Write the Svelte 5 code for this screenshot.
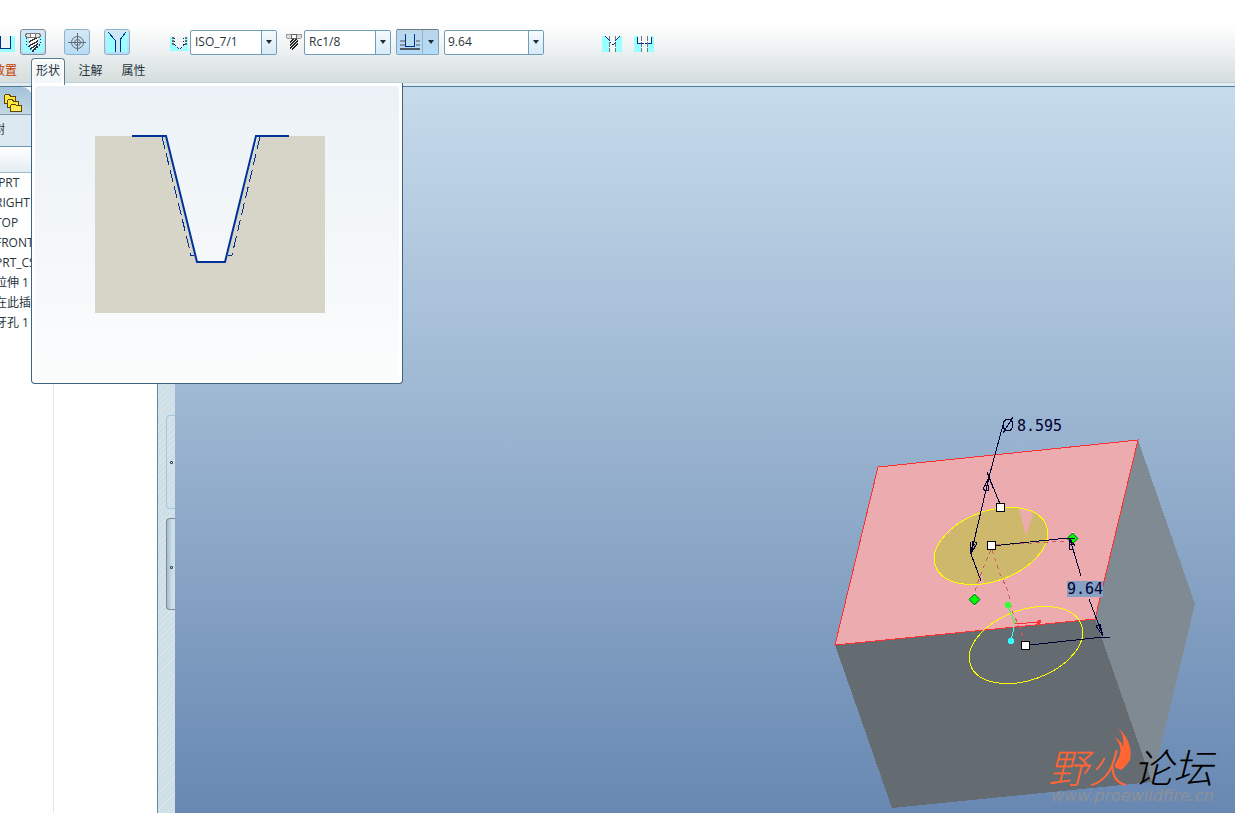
<script>
  let standard = $state('ISO_7/1');
  let size = $state('Rc1/8');
  let depth = $state('9.64');
  const tree = ['RIGHT', 'TOP', 'FRONT', 'PRT_CSYS', '拉伸 1', '在此插入', '牙孔 1'];
</script>

<div class="app">
  <header>
    <div class="toolbar">
      <button class="flat" aria-label="U">
        <svg class="crisp" width="20" height="16"><path fill="#9ff" d="M0 0h20v16H0z" /><path fill="#eef4f6" d="M5 0h10v12H5z" /><path d="M5 0v12h10V0" fill="none" stroke="#003090" /></svg>
      </button>
      <button class="tool on dark" aria-label="Thread">
        <svg class="crisp" width="20" height="20" viewBox="0 0 20 20">
          <path fill="#9ff" d="M0 4h20v16H0z" />
          <path d="M4 4h13v8l-6 8-7-8z" fill="#c8e2f0" />
          <path d="M6 5h9v10l-4 5-5-5z" fill="#fff" />
          <path d="M6 10l9-5M6 14l9-5M7 17l8-5M9 19l5-4" stroke="#333" stroke-width="1.500" />
          <path d="M3.500 1.500h13l1 2-1 2h-13l-1-2z" fill="#e4e4e4" stroke="#777" />
          <path d="M7.500 2v3h5V2" fill="#fff" stroke="#777" />
          <path d="M3.500 6v6l7 7 7-7V6" fill="none" stroke="#003090" stroke-dasharray="1 2" />
        </svg>
      </button>
      <button class="tool on" aria-label="Target">
        <svg width="20" height="20" viewBox="0 0 20 20" fill="none" stroke="#626c74"><circle cx="10.500" cy="10.500" r="6" /><circle cx="10.500" cy="10.500" r="3" /><path class="crisp" d="M10.500 1v18M1 10.500h18" /></svg>
      </button>
      <button class="tool on" aria-label="Countersink">
        <svg class="crisp" width="20" height="20" viewBox="0 0 20 20"><path d="M0 0h20v20H0z" fill="#9ff" /><path d="M1 0h18l-6 8v12H8V8z" fill="#cce6f6" /><path d="M1 0l7 8v12M19 0l-6 8v12" fill="none" stroke="#003090" /></svg>
      </button>

      <label class="icon gap-standard" for="standard">
        <svg class="crisp" width="18" height="14" viewBox="0 0 18 14"><path fill="#9ff" d="M0 0h18v14H0z" /><path fill="#eef4f6" d="M4 0h11v8l-5 5-6-5z" /><path d="M4 7l5 5h1l5-5" fill="none" stroke="#003090" stroke-dasharray="3 1" /><path d="M2.500 0v9M15.500 0v9" stroke="#667" stroke-width="2" stroke-dasharray="2 1" /><path d="M4.500 1v7M13.500 1v7" stroke="#223" stroke-dasharray="1 2" /></svg>
      </label>
      <div class="combo">
        <select id="standard" aria-label="Standard" bind:value={standard}><option>ISO_7/1</option></select>
        <span class="arrow"></span>
      </div>

      <label class="icon gap-size" for="size">
        <svg class="crisp" width="18" height="18" viewBox="0 0 18 18"><path d="M5 6h8v7l-3 4-2 0-3-3z" fill="#eee" /><path d="M5 9l5-4M5 12l8-7M5 15l8-7M7 16l6-5" stroke="#222" stroke-width="1.500" /><path d="M1.500 1.500h15v3l-1 1h-13l-1-1z" fill="#ddd" stroke="#999" /><path d="M6.500 1.500h5v4h-5z" fill="#fff" stroke="#666" /></svg>
      </label>
      <div class="combo">
        <select id="size" aria-label="Size" bind:value={size}><option>Rc1/8</option></select>
        <span class="arrow"></span>
      </div>

      <div class="split">
        <button aria-label="Depth option">
          <svg class="crisp" width="22" height="18" viewBox="0 0 22 18"><path d="M1 8h20M1 12h20" stroke="#8795a0" stroke-width="2" /><path d="M1 16h20" stroke="#505a62" stroke-width="2" /><path d="M6 0h11v14H6z" fill="#b9dbf2" /><path d="M6.500 1v12h9V1" fill="none" stroke="#003090" /></svg>
        </button>
        <button class="more" aria-label="More depth options"><span class="arrow bare"></span></button>
      </div>
      <div class="combo wide">
        <input aria-label="Depth" bind:value={depth} />
        <button class="arrow" aria-label="Recent depths"></button>
      </div>

      <button class="flat gap-end" aria-label="Exit countersink">
        <svg class="crisp" width="20" height="16" viewBox="0 0 20 16"><path fill="#9ff" d="M0 0h20v16H0z" /><path fill="#f2f6f8" d="M3 0h15l-4 5v11H7V5z" /><path d="M7.500 0v16M13.500 0v16" stroke="#777" stroke-dasharray="5 1" /><path d="M3 0l5 5M18 0l-5 5" stroke="#003090" fill="none" /><path d="M8 6l3 3 3-3" stroke="#003090" stroke-dasharray="2 1" fill="none" /></svg>
      </button>
      <button class="flat" aria-label="Counterbore">
        <svg class="crisp" width="20" height="16" viewBox="0 0 20 16"><path fill="#9ff" d="M0 0h20v16H0z" /><path fill="#f2f6f8" d="M4 0h13v7h-4v9H8V7H4z" /><path d="M7.500 0v16M13.500 0v16" stroke="#777" stroke-dasharray="5 1" /><path d="M3.500 1v6.500h4M17.500 1v6.500h-4" stroke="#003090" fill="none" /><path d="M8 7.500h6" stroke="#003090" stroke-dasharray="2 1" /></svg>
      </button>
    </div>

    <nav>
      <button class="tab warn">放置</button>
      <button class="tab active">形状</button>
      <button class="tab">注解</button>
      <button class="tab">属性</button>
      <section class="panel">
        <div class="sheet">
          <svg class="crisp" width="230" height="178" viewBox="0 0 230 178">
            <path d="M0 1h71l31 125h28l33-125h67v177H0z" fill="#d7d4c8" />
            <path d="M67 2l29 118h3M165 2l-28 118h-4" fill="none" stroke="#003090" stroke-dasharray="12 5" />
            <path d="M95 120.500h4M133 120.500h4" stroke="#003090" />
            <path class="smooth" d="M37 1h34l31 126h28L161 1h33" fill="none" stroke="#003399" stroke-width="2" />
          </svg>
        </div>
      </section>
    </nav>
  </header>

  <main>
    <aside>
      <div class="side-tab">
        <svg class="crisp" width="20" height="20" viewBox="0 0 20 20" fill="#ffe83a" stroke="#5b4700"><path d="M1.500 2.500l1-1h4l1 2h5v7h-11z" /><path d="M4.500 7.500l1-1h4l1 2h5v6h-11z" /><path d="M7.500 12.500l1-1h4l1 1h5v6h-11z" /><path d="M9 15h8M9 17h8" stroke="#fffac0" stroke-dasharray="1 1" /></svg>
      </div>
      <div class="side-title"><span>模型树</span></div>
      <div class="side-head"></div>
      <ul>
        <li><span>.PRT</span></li>
        {#each tree as item}<li><span>{item}</span></li>{/each}
      </ul>
    </aside>
    <div class="sash">
      <button class="grip" aria-label="Toggle navigator"><i></i></button>
      <button class="grip pressed" aria-label="Toggle browser"><i></i></button>
    </div>

    <div class="view">
      <svg class="scene crisp" viewBox="175 87 1060 726" preserveAspectRatio="xMaxYMax meet">
        <path d="M1138 440l57 164-43 178-57-163z" fill="#808a92" />
        <path d="M835 645l260-26 57 163-260 26z" fill="#646b71" />
        <path d="M878 467l260-27-43 179-260 26z" fill="#ecabaf" stroke="#ff3030" />
        <ellipse cx="991" cy="546" rx="59" ry="35" transform="rotate(-20 991 546)" fill="#ceb86c" />
        <path d="M1019 508l7 28 7-22-7-6zM982 573l-3 11h5zM952 528l-2 7-4-2z" fill="#ecabaf" />
        <g fill="none" stroke="#ff0">
          <ellipse cx="991" cy="546" rx="59" ry="35" transform="rotate(-20 991 546)" />
          <ellipse cx="1026" cy="645" rx="59" ry="35" transform="rotate(-20 1026 645)" />
        </g>
        <path d="M991 550l-8 18-9 26M996 545l72-4M992 550l8 24 8 17 4 20 8 17 4 13" fill="none" stroke="#c95c62" stroke-dasharray="4 4" />
        <path d="M1015 624l24-2" stroke="#ff3030" /><circle cx="1039" cy="622" r="2" fill="#ff3030" />
        <path d="M1008 606l7 18" stroke="#3f3" /><circle cx="1008" cy="605" r="3" fill="#3f3" />
        <path d="M1014 627l-3 14" stroke="#3ff" /><circle cx="1011" cy="641" r="3" fill="#3ff" />
        <path d="M1072.500 532l6.500 6.500-6.500 6.500-6.500-6.500zM974.500 593l6.500 6.500-6.500 6.500-6.500-6.500z" fill="#fff" />
        <path class="smooth" d="M1072.500 533l5.500 5.500-5.500 5.500-5.500-5.500zM974.500 594l5.500 5.500-5.500 5.500-5.500-5.500z" fill="#0f0" stroke="#030" />
        <g fill="none" stroke="#000033">
          <path d="M1003 425l-14 52-18 77 10 27M987 472l13 32" />
          <path d="M989 477l-6 12 3 2 3-14 4 11M984 485h4v5h-3M971 554l-1-12M971 554l6-11-4-2-2 13M970 549l5-5" />
          <path d="M996 545.500l72-7.500h7M1030 645l73-8h7" />
          <path d="M1070 539l11 37M1089 599l14 37" />
          <path d="M1070 539l-1 10 4 1-3-11 5 7M1070 544h3M1103 636l-7-10 4-2 3 12M1098 630l3-3" />
          <ellipse cx="1008" cy="425" rx="5" ry="6" /><path d="M1003 433l10-16" />
        </g>
        <g fill="#fff" stroke="#000"><path d="M996.500 503.500h8v8h-8zM987.500 541.500h8v8h-8zM1021.500 641.500h8v8h-8z" /></g>
        <path d="M1067 581h36v16h-36z" fill="#86a1c4" />
        <text class="dim" x="1017" y="431">8.595</text>
        <text class="dim" x="1067" y="594">9.64</text>
        <g class="smooth">
          <text class="mark" x="1048" y="783" fill="#ff6633">野火</text>
          <text class="mark" x="1133" y="783" fill="#000">论坛</text>
          <path d="M1118 728c12 10 15 24 11 33-4 7-8 10-13 7-3-3 1-6 3-11 3-8 1-14-5-20 6 3 8 6 9 10 1-8 0-13-5-19z" fill="#ff6633" />
          <text class="url" x="1051" y="801">www.proewildfire.cn</text>
        </g>
      </svg>
    </div>
  </main>
</div>

<style>
  :global(body) { margin: 0; }
  .app { height: 100vh; display: flex; flex-direction: column; overflow: hidden; background: #fff; color: #28343c; font: 12px/16px "Open Sans", "Noto Sans CJK SC", sans-serif; }
  svg { display: block; flex: none; }
  .crisp { shape-rendering: crispEdges; }
  .smooth { shape-rendering: auto; }
  button, select, input { font: inherit; color: inherit; margin: 0; padding: 0; border: 0; background: none; box-sizing: border-box; }

  header { position: relative; z-index: 2; padding-top: 28px; background: linear-gradient(#fff 24px, #f1f4f4 45px, #d5dddd); border-bottom: 1px solid #bdd2de; }
  .toolbar { display: flex; align-items: center; height: 28px; margin-left: -5px; }
  .flat { flex: none; margin-right: 5px; }
  .gap-end { margin-left: 58px; margin-right: 12px; }
  .flat svg { margin-top: 3px; }
  .tool { flex: none; width: 26px; height: 26px; margin-right: 14px; display: grid; place-items: center; border: 1px solid #8ab1ce; border-radius: 3px; background: linear-gradient(#d5e8f5, #b9dcf5); }
  .tool.dark { margin-right: 18px; border-color: #7b8f9c; }
  .icon { flex: none; width: 18px; }
  .gap-standard { margin-left: 26px; margin-right: 2px; padding-top: 4px; }
  .gap-size { margin-left: 8px; margin-right: 1px; }
  .combo { display: flex; flex: none; width: 87px; height: 25px; box-sizing: border-box; border: 1px solid #6d9db8; border-radius: 2px; background: #fff; }
  .combo.wide { width: 100px; }
  .combo select, .combo input { flex: 1; min-width: 0; padding-left: 3px; appearance: none; outline: none; }
  .combo select { padding-left: 4px; }
  .arrow { width: 15px; flex: none; border-left: 1px solid #6d9db8; background: linear-gradient(#f6fafc, #d6eaf7); display: grid; place-items: center; pointer-events: none; box-sizing: border-box; }
  .arrow::after { content: ""; border: 3px solid transparent; border-top: 4px solid #1f2d38; border-bottom: 0; }
  .arrow.bare { border: 0; background: none; }
  .split { display: flex; flex: none; width: 43px; height: 26px; box-sizing: border-box; margin: 0 5px; border: 1px solid #7ba5c2; border-top-color: #6f7d88; border-radius: 2px; background: linear-gradient(#bad5e8, #b4dcf8); }
  .split button { display: grid; place-items: center; width: 26px; }
  .split .more { width: 16px; border-left: 1px solid #8db5d0; }

  nav { position: relative; display: flex; height: 24px; margin-top: 2px; padding-top: 1px; box-sizing: border-box; margin-left: -11px; }
  .tab { flex: none; width: 43px; line-height: 20px; }
  .tab.warn { width: 42px; text-align: left; padding-left: 4px; color: #c63c00; }
  .tab.active { position: relative; z-index: 2; width: 34px; margin: -1px 4px -3px 0; padding-bottom: 3px; border: 1px solid #587f98; border-bottom: 0; border-radius: 4px 4px 0 0; background: #f3f8fa; box-shadow: inset 0 0 0 2px #fff; }
  .panel { position: absolute; z-index: 1; left: 42px; top: 25px; width: 372px; height: 301px; box-sizing: border-box; padding: 3px; border: 1px solid #3c6480; border-top: 0; border-radius: 0 0 4px 4px; background: #fff; }
  .sheet { height: 100%; box-sizing: border-box; border-radius: 4px; background: linear-gradient(#ebf1f6, #fbfdfd); padding: 49px 60px; }

  main { flex: 1; min-height: 0; display: grid; grid-template-columns: 158px 17px 1fr; padding-top: 3px; background: #e4ebee; }
  aside { min-width: 0; overflow: hidden; background: #fff; border-top: 1px solid #4d7a94; border-right: 1px solid #5f8aa2; }
  .side-tab { height: 28px; padding: 6px 0 0 3px; box-sizing: border-box; width: 32px; border-radius: 0 10px 0 0; background: linear-gradient(#a3c2d8, #c3d8e5); border-bottom: 1px solid #8899a3; }
  .side-title { height: 32px; line-height: 30px; box-sizing: border-box; border-bottom: 1px solid #6c9ab5; background: #dde9f0; }
  .side-title span { margin-left: -31px; }
  .side-head { height: 26px; box-sizing: border-box; border-bottom: 1px solid #9fbccb; background: linear-gradient(#fff, #e3edf2); }
  ul { list-style: none; margin: 0; padding: 0; width: 53px; height: 100%; border-right: 1px solid #e4e8ea; }
  li { height: 20px; line-height: 20px; white-space: nowrap; }
  li span { margin-left: -5px; }
  .sash { border-top: 1px solid #4d7a94; background: repeating-linear-gradient(135deg, #cfdfe8 0 3px, #d8e5ea 3px 4px); padding: 328px 0 0 8px; display: flex; flex-direction: column; gap: 9px; }
  .grip { height: 94px; border: 1px solid #a4c8df; border-right: 0; border-radius: 4px 0 0 4px; display: flex; align-items: center; padding-left: 3px; }
  .grip.pressed { height: 92px; padding-top: 6px; border-color: #7c8c96; background: linear-gradient(90deg, #a9bbc7, #ccdfea 5px); }
  .grip i { width: 3px; height: 3px; box-sizing: border-box; border: 1px solid #2b3d49; border-radius: 1px; }
  .view { min-width: 0; min-height: 0; border-top: 1px solid #4d7fa0; background: linear-gradient(#c6dbeb, #6888b2); }
  .scene { width: 100%; height: 100%; }
  .dim { font: 15px "DejaVu Sans Mono", monospace; fill: #000033; }
  .mark { font: italic 300 40px "Noto Sans CJK SC", sans-serif; }
  .url { font: italic 16px "DejaVu Sans", sans-serif; fill: #8e9097; }
</style>
